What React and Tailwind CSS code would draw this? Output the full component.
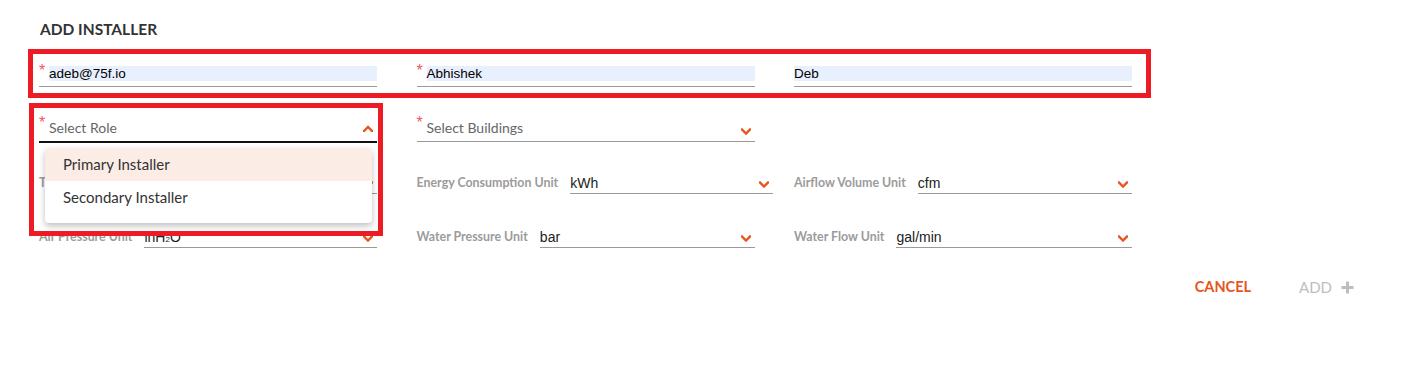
import React from "react";

const Chevron = ({ up = false, className = "" }) => (
  <svg width="10" height="7" viewBox="0 0 10 7" className={className}>
    {up ? (
      <polyline points="1,6 5,2 9,6" fill="none" stroke="#e8541c" strokeWidth="2.4" strokeLinecap="square" />
    ) : (
      <polyline points="1,1.5 5,5.5 9,1.5" fill="none" stroke="#e8541c" strokeWidth="2.4" strokeLinecap="square" />
    )}
  </svg>
);

const Star = () => (
  <span className="absolute left-[0px] top-[-3px] text-[16px] leading-none text-[#f25660] font-['Liberation_Sans',sans-serif]">*</span>
);

const TextField = ({ value, required }) => (
  <div className="relative h-[21px] border-b border-[#9a9a9a]">
    {required && <Star />}
    <div className={`${required ? "ml-[10px]" : ""} h-[15px] bg-[#e8f0fe] text-[13.5px] leading-[15px] text-black font-['Liberation_Sans',sans-serif]`}>
      {value}
    </div>
  </div>
);

const UnitSelect = ({ label, value, minW = "" }) => (
  <div className="flex items-center h-[21px]">
    <span className="whitespace-nowrap text-[12.4px] font-bold text-[#9b9b9b] mr-[12px] leading-none">{label}</span>
    <div className={`flex-1 ${minW} flex items-center justify-between h-[21px] border-b border-[#9a9a9a] pr-[4px]`}>
      <span className="text-[14px] text-[#222] leading-none font-['Liberation_Sans',sans-serif]">{value}</span>
      <Chevron className="mt-[3px]" />
    </div>
  </div>
);

export default function App() {
  return (
    <div className="relative w-[1426px] h-[373px] bg-white font-['Lato',sans-serif] overflow-hidden">
      <div className="pl-[39px] pt-[21px]">
        <h1 className="h-[17px] text-[15.5px] font-bold leading-[17px] text-[#333] ml-[1px]">ADD INSTALLER</h1>

        {/* Row 1 */}
        <div className="grid grid-cols-[338px_338px_338px] gap-x-[39.5px] mt-[28px]">
          <TextField value="adeb@75f.io" required />
          <TextField value="Abhishek" required />
          <TextField value="Deb" />
        </div>

        {/* Row 2 */}
        <div className="grid grid-cols-[338px_338px_338px] gap-x-[39.5px] mt-[31px]">
          <div className="relative h-[25px] border-b-2 border-[#111]">
            <Star />
            <div className="flex items-center justify-between h-[20px] pl-[10px] pr-[4px]">
              <span className="text-[14px] text-[#666] leading-none">Select Role</span>
              <Chevron up className="mt-[1px]" />
            </div>
          </div>
          <div className="relative h-[24px] border-b border-[#9a9a9a]">
            <Star />
            <div className="flex items-center justify-between h-[20px] pl-[10px] pr-[4px]">
              <span className="text-[14px] text-[#666] leading-none">Select Buildings</span>
              <Chevron className="mt-[7px]" />
            </div>
          </div>
          <div />
        </div>

        {/* Row 3 */}
        <div className="grid grid-cols-[338px_338px_338px] gap-x-[39.5px] mt-[30px]">
          <UnitSelect label="Temperature Unit" value="°F" />
          <UnitSelect label="Energy Consumption Unit" value="kWh" minW="min-w-[203px]" />
          <UnitSelect label="Airflow Volume Unit" value="cfm" />
        </div>

        {/* Row 4 */}
        <div className="grid grid-cols-[338px_338px_338px] gap-x-[39.5px] mt-[33px]">
          <UnitSelect label="Air Pressure Unit" value={<>inH<span className="text-[8px]">2</span>O</>} />
          <UnitSelect label="Water Pressure Unit" value="bar" />
          <UnitSelect label="Water Flow Unit" value="gal/min" />
        </div>
      </div>

      {/* Buttons */}
      <div className="flex justify-end items-center gap-[48px] pr-[72px] mt-[30px]">
        <button className="text-[14.5px] font-bold text-[#e8541c] leading-[18px]">CANCEL</button>
        <button className="flex items-center gap-[9px] text-[15px] text-[#bdbdbd] leading-[18px]">
          ADD
          <svg width="13" height="13" viewBox="0 0 13 13">
            <line x1="6.5" y1="0.5" x2="6.5" y2="12.5" stroke="#bdbdbd" strokeWidth="3" />
            <line x1="0.5" y1="6.5" x2="12.5" y2="6.5" stroke="#bdbdbd" strokeWidth="3" />
          </svg>
        </button>
      </div>

      {/* Dropdown menu overlay */}
      <div className="absolute left-[45px] top-[148px] w-[327px] bg-white rounded-[4px] shadow-[0_3px_6px_rgba(0,0,0,0.25)] pb-[9px] overflow-hidden">
        <div className="h-[33px] flex items-center pl-[18px] bg-[#fbece6] text-[15px] text-[#333]">Primary Installer</div>
        <div className="h-[33px] flex items-center pl-[18px] text-[15px] text-[#333]">Secondary Installer</div>
      </div>

      {/* Red annotation boxes */}
      <div className="absolute left-[28px] top-[49px] w-[1123px] h-[49px] border-[5px] border-[#ed1c24] pointer-events-none" />
      <div className="absolute left-[29px] top-[103px] w-[354px] h-[133px] border-[5px] border-[#ed1c24] pointer-events-none" />
    </div>
  );
}
